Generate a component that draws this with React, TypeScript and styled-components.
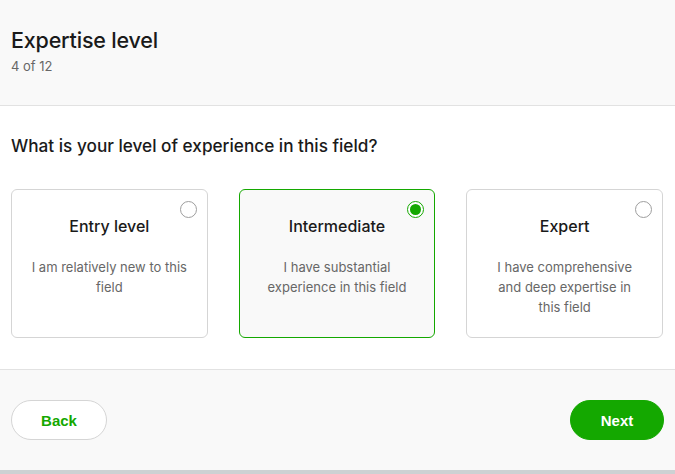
import { useState } from 'react'
import styled, { createGlobalStyle } from 'styled-components'

const GREEN = '#14a800'

const GlobalStyle = createGlobalStyle`
  * { box-sizing: border-box; }
  html, body { margin: 0; padding: 0; }
  body {
    background: #cdd1d3;
    font-family: Inter, "Noto Sans", sans-serif;
    color: #1a1a1a;
  }
`

const Panel = styled.div`
  height: 470px;
  display: flex;
  flex-direction: column;
  background: #fff;
`

const Header = styled.header`
  height: 106px;
  background: #f9f9f9;
  border-bottom: 1px solid #e2e2e2;
  padding: 27px 11px 0;
`

const Title = styled.h1`
  margin: 0;
  font-size: 21.5px;
  font-weight: 500;
  line-height: 26px;
  letter-spacing: -0.2px;
`

const Step = styled.div`
  margin-top: 4px;
  font-size: 13px;
  line-height: 18px;
  color: #676767;
`

const Main = styled.main`
  flex: 1;
  padding: 27px 12px 0 11px;
  border-bottom: 1px solid #e2e2e2;
`

const Question = styled.h2`
  margin: 0;
  font-size: 17.2px;
  font-weight: 500;
  line-height: 26px;
`

const Options = styled.div`
  margin-top: 30px;
  display: grid;
  grid-template-columns: repeat(3, 1fr);
  gap: 31px;
`

const Card = styled.div<{ $selected: boolean }>`
  position: relative;
  height: 149px;
  padding: 26px 18px 0;
  border: 1px solid ${(p) => (p.$selected ? GREEN : '#d5d5d5')};
  border-radius: 6px;
  background: ${(p) => (p.$selected ? '#f9f9f9' : '#fff')};
  text-align: center;
  cursor: pointer;
`

const Radio = styled.span<{ $checked: boolean }>`
  position: absolute;
  top: 11px;
  right: 10px;
  width: 17px;
  height: 17px;
  border-radius: 50%;
  border: 1px solid ${(p) => (p.$checked ? GREEN : '#9e9e9e')};
  background: #fff;
  display: flex;
  align-items: center;
  justify-content: center;

  &::after {
    content: '';
    display: ${(p) => (p.$checked ? 'block' : 'none')};
    width: 11px;
    height: 11px;
    border-radius: 50%;
    background: ${GREEN};
  }
`

const CardTitle = styled.div`
  font-size: 16px;
  font-weight: 500;
  line-height: 20px;
`

const CardText = styled.p`
  max-width: 156px;
  margin: 21px auto 0;
  font-size: 13px;
  line-height: 20px;
  color: #676767;
`

const Footer = styled.footer`
  flex: 0 0 100px;
  background: #f9f9f9;
  display: flex;
  align-items: center;
  justify-content: space-between;
  padding: 0 11px;
`

const Button = styled.button<{ $primary?: boolean }>`
  height: 40px;
  border-radius: 20px;
  font-family: "Liberation Sans", Arial, sans-serif;
  font-size: 15px;
  font-weight: 700;
  cursor: pointer;
  border: 1px solid ${(p) => (p.$primary ? GREEN : '#d5d5d5')};
  background: ${(p) => (p.$primary ? GREEN : '#fff')};
  color: ${(p) => (p.$primary ? '#fff' : GREEN)};
  width: ${(p) => (p.$primary ? '94px' : '96px')};
`

const OPTIONS = [
  { id: 'entry', title: 'Entry level', text: 'I am relatively new to this field' },
  { id: 'intermediate', title: 'Intermediate', text: 'I have substantial experience in this field' },
  { id: 'expert', title: 'Expert', text: 'I have comprehensive and deep expertise in this field' },
]

export default function App() {
  const [level, setLevel] = useState('intermediate')

  return (
    <>
      <GlobalStyle />
      <Panel>
        <Header>
          <Title>Expertise level</Title>
          <Step>4 of 12</Step>
        </Header>
        <Main>
          <Question>What is your level of experience in this field?</Question>
          <Options>
            {OPTIONS.map((o) => (
              <Card key={o.id} $selected={level === o.id} onClick={() => setLevel(o.id)}>
                <Radio $checked={level === o.id} />
                <CardTitle>{o.title}</CardTitle>
                <CardText>{o.text}</CardText>
              </Card>
            ))}
          </Options>
        </Main>
        <Footer>
          <Button>Back</Button>
          <Button $primary>Next</Button>
        </Footer>
      </Panel>
    </>
  )
}
